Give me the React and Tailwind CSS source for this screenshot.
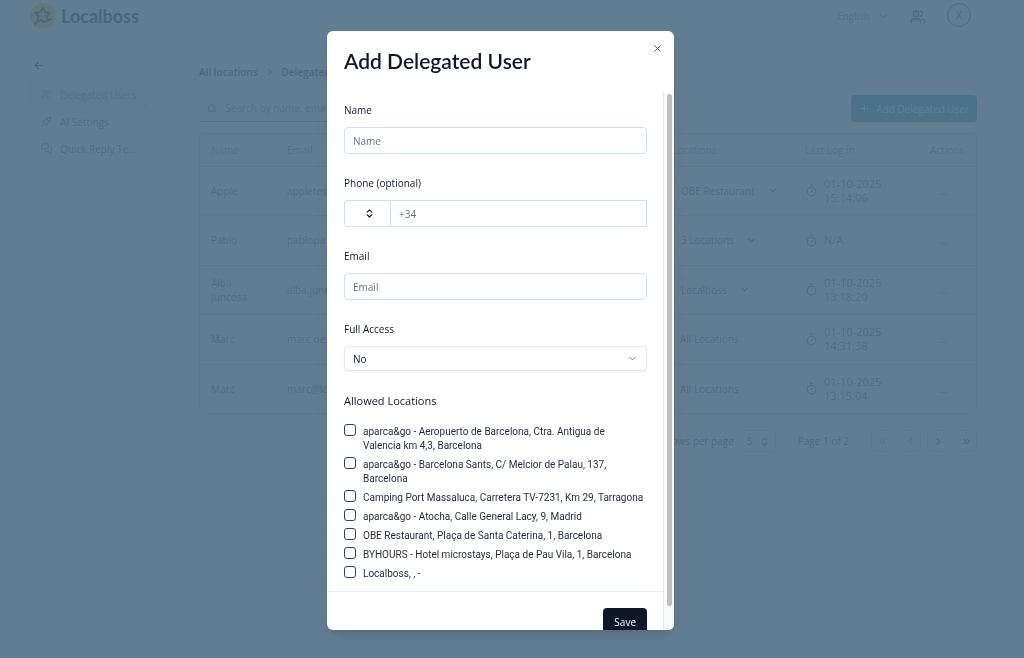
import React, { useState } from 'react';
import {
  ArrowLeft,
  ChevronDown,
  ChevronLeft,
  ChevronRight,
  ChevronsLeft,
  ChevronsRight,
  ChevronsUpDown,
  MessagesSquare,
  Plus,
  Search,
  Sparkles,
  Timer,
  Users,
  X,
} from 'lucide-react';

const NAV_ITEMS = [
  { label: 'Delegated Users', icon: Users, active: true },
  { label: 'AI Settings', icon: Sparkles },
  { label: 'Quick Reply Te...', icon: MessagesSquare },
];

const USERS = [
  { id: 1, name: 'Apple', email: 'appletes', locations: 'OBE Restaurant', menu: true, lastLogin: '01-10-2025 15:14:06' },
  { id: 2, name: 'Pablo', email: 'pablopa', locations: '3 Locations', menu: true, lastLogin: 'N/A' },
  { id: 3, name: 'Alba Juncosa', email: 'alba.junc', locations: 'Localboss', menu: true, lastLogin: '01-10-2025 13:18:20' },
  { id: 4, name: 'Marc', email: 'marc.de.', locations: 'All Locations', lastLogin: '01-10-2025 14:31:38' },
  { id: 5, name: 'Marc', email: 'marc@lo', locations: 'All Locations', lastLogin: '01-10-2025 13:15:04' },
];

const LOCATIONS = [
  'aparca&go - Aeropuerto de Barcelona, Ctra. Antigua de Valencia km 4,3, Barcelona',
  'aparca&go - Barcelona Sants, C/ Melcior de Palau, 137, Barcelona',
  'Camping Port Massaluca, Carretera TV-7231, Km 29, Tarragona',
  'aparca&go - Atocha, Calle General Lacy, 9, Madrid',
  'OBE Restaurant, Plaça de Santa Caterina, 1, Barcelona',
  'BYHOURS - Hotel microstays, Plaça de Pau Vila, 1, Barcelona',
  'Localboss, , -',
];

const Logo = () => (
  <a href="#home" className="flex items-center gap-[5px]">
    <svg viewBox="0 0 26 26" className="size-[26px]" fill="none" aria-hidden="true">
      <circle cx="13" cy="13" r="13" fill="#f5c518" />
      <path
        d="M7.4 17.6l1.3-4.6-3.6-3.1 4.9-.5L13 4.8l2.3 4.6 5.2.5-3.7 3.1.9 3.2"
        stroke="#0f172a"
        strokeWidth="1.7"
        strokeLinejoin="round"
        strokeLinecap="round"
      />
      <path
        d="M4.4 20.9l7-4.1 2 2.6 7.6-3.4"
        stroke="#0f172a"
        strokeWidth="1.8"
        strokeLinejoin="round"
        strokeLinecap="round"
      />
      <path d="M11.4 12v1.6M14.6 12v1.6" stroke="#0f172a" strokeWidth="1.2" strokeLinecap="round" />
    </svg>
    <span className="font-[Lato] text-[18px] leading-6 font-bold">Localboss</span>
  </a>
);

const Header = () => (
  <header className="flex h-[38px] items-start justify-between bg-[#f1f7fb] pt-[3px] pr-[53px] pl-[30px]">
    <Logo />
    <div className="flex items-center">
      <button type="button" className="flex items-center gap-2 pt-[2px] text-slate-500">
        English
        <ChevronDown className="size-[11px]" strokeWidth={2.5} />
      </button>
      <button type="button" aria-label="Users" className="ml-[21px] pt-[3px] text-slate-600">
        <Users className="size-4" />
      </button>
      <button
        type="button"
        className="ml-[21px] flex size-6 items-center justify-center rounded-full border border-slate-700"
      >
        X
      </button>
    </div>
  </header>
);

const Sidebar = () => (
  <aside className="w-[154px] shrink-0 bg-white px-[14px] pt-[11px]">
    <div className="bg-[#f3f8fb] px-1 pt-[11px] pb-1">
      <a href="#back" aria-label="Back" className="ml-[3px] inline-flex">
        <ArrowLeft className="size-[11px]" strokeWidth={2.5} />
      </a>
      <nav className="mt-[7px] flex flex-col">
        {NAV_ITEMS.map(({ label, icon: Icon, active }) => (
          <a
            key={label}
            href="#nav"
            className={`flex h-[27px] items-center gap-2 rounded px-[11px] whitespace-nowrap ${
              active ? 'bg-[#dcebf7] text-slate-500' : 'text-slate-600'
            }`}
          >
            <Icon className="size-[11px] shrink-0" />
            {label}
          </a>
        ))}
      </nav>
    </div>
  </aside>
);

const UsersTable = () => (
  <div className="mt-[11px] overflow-hidden rounded-md border border-slate-300">
    <table className="w-full table-fixed text-left">
      <thead>
        <tr className="h-8 text-slate-500">
          <th className="w-[76px] px-[11px] font-normal">Name</th>
          <th className="px-[11px] font-normal">Email</th>
          <th className="w-[132px] px-3 font-normal">Locations</th>
          <th className="w-[125px] px-[13px] font-normal">Last Log in</th>
          <th className="w-[59px] px-[13px] font-normal">Actions</th>
        </tr>
      </thead>
      <tbody>
        {USERS.map((user) => (
          <tr
            key={user.id}
            className="h-[49px] border-t border-slate-300 leading-[14px] text-slate-600 even:h-[50px]"
          >
            <td className="px-[11px]">{user.name}</td>
            <td className="px-[11px]">{user.email}</td>
            <td className="pl-2">
              {user.menu ? (
                <button
                  type="button"
                  className="flex h-[22px] items-center gap-3 rounded border border-slate-200 px-3 whitespace-nowrap text-slate-700"
                >
                  {user.locations}
                  <ChevronDown className="size-[11px]" strokeWidth={2.5} />
                </button>
              ) : (
                <span className="px-3">{user.locations}</span>
              )}
            </td>
            <td className="px-[13px]">
              <span className="flex items-center gap-[6px]">
                <Timer className="size-[13px] shrink-0" />
                <span className="w-[60px] text-[11px]">{user.lastLogin}</span>
              </span>
            </td>
            <td className="px-[22px]">
              <button type="button" aria-label={`Actions for ${user.name}`} className="text-[11px]">
                ...
              </button>
            </td>
          </tr>
        ))}
      </tbody>
    </table>
  </div>
);

const pagerClass = 'flex size-[22px] items-center justify-center rounded border border-slate-300';

const Pagination = () => (
  <div className="mt-4 flex items-center justify-end font-medium text-slate-700">
    <label htmlFor="rows">Rows per page</label>
    <div className="ml-[6px] grid h-[22px] w-9 items-center rounded border border-slate-300">
      <select id="rows" defaultValue="5" className="col-start-1 row-start-1 appearance-none pl-[6px]">
        <option>5</option>
        <option>10</option>
      </select>
      <ChevronsUpDown
        className="pointer-events-none col-start-1 row-start-1 mr-[5px] size-[11px] justify-self-end"
        strokeWidth={2.5}
      />
    </div>
    <span className="mx-[22px]">Page 1 of 2</span>
    <div className="flex gap-[6px]">
      <button type="button" aria-label="First page" disabled className={`${pagerClass} text-slate-400`}>
        <ChevronsLeft className="size-[11px]" strokeWidth={2.5} />
      </button>
      <button type="button" aria-label="Previous page" disabled className={`${pagerClass} text-slate-400`}>
        <ChevronLeft className="size-[11px]" strokeWidth={2.5} />
      </button>
      <button type="button" aria-label="Next page" className={pagerClass}>
        <ChevronRight className="size-[11px]" strokeWidth={2.5} />
      </button>
      <button type="button" aria-label="Last page" className={pagerClass}>
        <ChevronsRight className="size-[11px]" strokeWidth={2.5} />
      </button>
    </div>
  </div>
);

const UsersPage = () => (
  <main className="min-w-0 flex-1 bg-white pt-[26px] pr-[11px] pl-[22px]">
    <div className="flex items-center gap-[7px] leading-4 font-semibold text-slate-800">
      <a href="#locations">All locations</a>
      <ChevronRight className="size-[10px] text-slate-600" strokeWidth={2.5} />
      <span>Delegated</span>
    </div>
    <div className="mt-[15px] flex items-stretch justify-between">
      <label className="flex w-[300px] items-center gap-2 border-b border-slate-400 pl-2 text-slate-600">
        <Search className="size-[11px]" />
        <input
          type="text"
          aria-label="Search"
          placeholder="Search by name, email"
          className="w-full placeholder:text-slate-500"
        />
      </label>
      <button
        type="button"
        className="flex h-[27px] items-center gap-[6px] rounded bg-[#149494] px-2 text-slate-100"
      >
        <Plus className="size-[11px]" />
        Add Delegated User
      </button>
    </div>
    <UsersTable />
    <Pagination />
  </main>
);

const inputClass =
  'h-[27px] w-full rounded border border-[#cfe0ea] bg-white px-2 placeholder:text-slate-500 focus:outline-none';

const Field = ({ id, label, children }) => (
  <div className="mb-[22px]">
    <label htmlFor={id} className="mb-[10px] block leading-[14px] font-medium">
      {label}
    </label>
    {children}
  </div>
);

const AddUserDialog = () => {
  const [selected, setSelected] = useState([]);

  const toggle = (location) =>
    setSelected((prev) =>
      prev.includes(location) ? prev.filter((l) => l !== location) : [...prev, location]
    );

  return (
    <div
      role="dialog"
      aria-modal="true"
      aria-labelledby="dialog-title"
      className="flex max-h-[91vh] w-full max-w-[347px] flex-col overflow-hidden rounded-md bg-white text-slate-900 shadow-lg"
    >
      <div className="flex h-[61px] shrink-0 items-start justify-between pt-3 pr-[11px] pl-[17px]">
        <h2 id="dialog-title" className="pt-[3px] font-[Lato] text-[21px] leading-[30px] font-semibold">
          Add Delegated User
        </h2>
        <button type="button" aria-label="Close" className="text-slate-600">
          <X className="size-[11px]" />
        </button>
      </div>
      <div className="flex min-h-0 flex-1">
        <form className="min-w-0 flex-1 overflow-hidden">
          <div className="pt-[11px] pr-4 pb-[10px] pl-[17px]">
            <Field id="name" label="Name">
              <input id="name" type="text" placeholder="Name" className={inputClass} />
            </Field>
            <Field id="phone" label="Phone (optional)">
              <div className="flex">
                <button
                  type="button"
                  aria-label="Country"
                  className="flex h-[27px] w-[46px] shrink-0 items-center justify-center rounded-l border border-r-0 border-[#cfe0ea] pl-[3px]"
                >
                  <ChevronsUpDown className="size-[11px]" strokeWidth={2.5} />
                </button>
                <input
                  id="phone"
                  type="tel"
                  placeholder="+34"
                  className="h-[27px] w-full min-w-0 border border-[#cfe0ea] px-2 placeholder:text-slate-500 focus:outline-none"
                />
              </div>
            </Field>
            <Field id="email" label="Email">
              <input id="email" type="email" placeholder="Email" className={inputClass} />
            </Field>
            <Field id="access" label="Full Access">
              <div className="grid items-center">
                <select
                  id="access"
                  defaultValue="No"
                  className="col-start-1 row-start-1 h-[25px] w-full appearance-none rounded border border-slate-200 bg-white px-2 shadow-xs"
                >
                  <option>No</option>
                  <option>Yes</option>
                </select>
                <ChevronDown className="pointer-events-none col-start-1 row-start-1 mr-[9px] size-[11px] justify-self-end text-slate-500" />
              </div>
            </Field>
            <fieldset>
              <legend className="mb-[15px] text-[11px] leading-4 font-medium">Allowed Locations</legend>
              <div className="flex flex-col gap-1 font-[Roboto]">
                {LOCATIONS.map((location) => (
                  <label key={location} className="flex items-start gap-[7px] leading-[14px] text-slate-800">
                    <input
                      type="checkbox"
                      checked={selected.includes(location)}
                      onChange={() => toggle(location)}
                      className="size-3 shrink-0 appearance-none rounded-[3px] border border-slate-700 checked:bg-slate-900"
                    />
                    <span className="pt-px pr-[3px]">{location}</span>
                  </label>
                ))}
              </div>
            </fieldset>
          </div>
          <div className="flex justify-end border-t border-[#e2eefa] py-4 pr-4">
            <button
              type="submit"
              className="h-[27px] rounded bg-slate-900 px-[11px] font-medium text-slate-50"
            >
              Save
            </button>
          </div>
        </form>
        <div
          aria-hidden="true"
          className="flex w-[11px] shrink-0 flex-col items-center border-l border-gray-200 bg-gray-50 pt-[2px] pb-6"
        >
          <div className="w-[5px] flex-1 rounded-full bg-[#bfbfbf]" />
        </div>
      </div>
    </div>
  );
};

export default function App() {
  return (
    <div className="h-screen overflow-hidden font-['Open_Sans',sans-serif] text-[10px] leading-[14px] text-slate-900">
      <div className="flex min-h-screen flex-col bg-[#e3f1f6]" aria-hidden="true">
        <Header />
        <div className="flex flex-1 gap-[11px] pr-9 pl-3">
          <Sidebar />
          <UsersPage />
        </div>
      </div>
      <div className="fixed inset-0 flex items-center justify-center bg-[#516f86]/90 pt-[3px] pr-[23px]">
        <AddUserDialog />
      </div>
    </div>
  );
}
